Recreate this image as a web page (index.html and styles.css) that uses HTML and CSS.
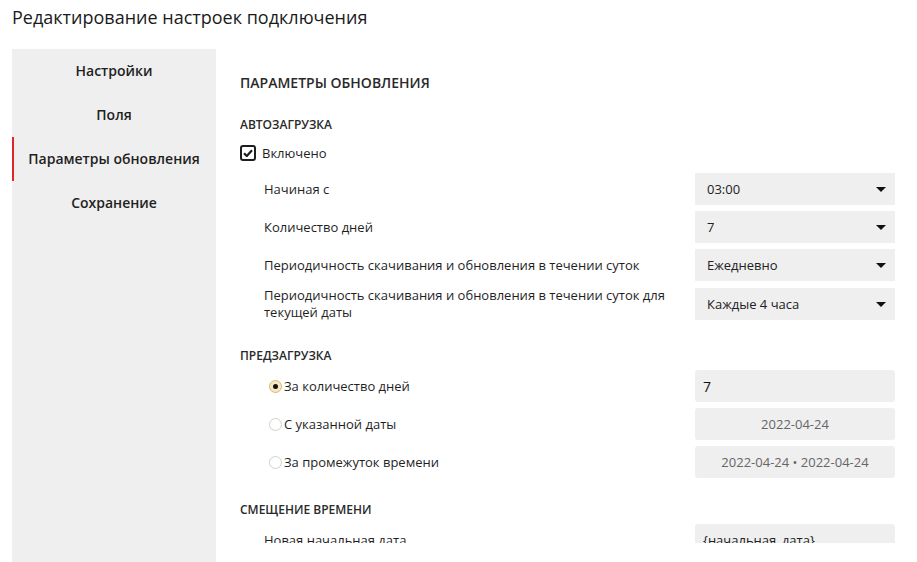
FILE: index.html
```html
<!DOCTYPE html>
<html lang="ru">
<head>
<meta charset="utf-8">
<title>Редактирование настроек подключения</title>
<link rel="stylesheet" href="styles.css">
</head>
<body>
<h1 class="page-title">Редактирование настроек подключения</h1>
<div class="layout">
  <nav class="sidebar">
    <div class="nav-item">Настройки</div>
    <div class="nav-item">Поля</div>
    <div class="nav-item active">Параметры обновления</div>
    <div class="nav-item">Сохранение</div>
  </nav>
  <main class="content">
    <h2 class="section-title">ПАРАМЕТРЫ ОБНОВЛЕНИЯ</h2>

    <h3 class="group-title">АВТОЗАГРУЗКА</h3>
    <label class="check-row">
      <span class="checkbox">
        <svg width="10" height="8" viewBox="0 0 10 8"><path d="M1 4.2 L3.8 7 L9 1.2" fill="none" stroke="#1e1e1e" stroke-width="2.2"/></svg>
      </span>
      <span>Включено</span>
    </label>

    <div class="rows">
      <div class="row">
        <div class="label">Начиная с</div>
        <div class="select"><span>03:00</span><i class="caret"></i></div>
      </div>
      <div class="row">
        <div class="label">Количество дней</div>
        <div class="select"><span>7</span><i class="caret"></i></div>
      </div>
      <div class="row">
        <div class="label">Периодичность скачивания и обновления в течении суток</div>
        <div class="select"><span>Ежедневно</span><i class="caret"></i></div>
      </div>
      <div class="row">
        <div class="label">Периодичность скачивания и обновления в течении суток для текущей даты</div>
        <div class="select"><span>Каждые 4 часа</span><i class="caret"></i></div>
      </div>
    </div>

    <h3 class="group-title group-gap">ПРЕДЗАГРУЗКА</h3>
    <div class="rows rows-tight">
      <div class="row">
        <label class="label radio-label"><span class="radio checked"></span>За количество дней</label>
        <div class="field value-strong">7</div>
      </div>
      <div class="row">
        <label class="label radio-label"><span class="radio"></span>С указанной даты</label>
        <div class="field center muted">2022-04-24</div>
      </div>
      <div class="row">
        <label class="label radio-label"><span class="radio"></span>За промежуток времени</label>
        <div class="field center muted">2022-04-24 • 2022-04-24</div>
      </div>
    </div>

    <h3 class="group-title group-gap2">СМЕЩЕНИЕ ВРЕМЕНИ</h3>
    <div class="rows rows-tight">
      <div class="row">
        <div class="label">Новая начальная дата</div>
        <div class="field">{начальная_дата}</div>
      </div>
    </div>
  </main>
</div>
</body>
</html>
```

FILE: styles.css
```css
* { box-sizing: border-box; }
html, body { margin: 0; padding: 0; background: #fff; }
body {
  font-family: "Open Sans", "Noto Sans", sans-serif;
  color: #1f1f1f;
  overflow: hidden;
  height: 562px;
}
.page-title {
  margin: 0;
  padding: 5px 12px 0;
  font-size: 18px;
  line-height: 24px;
  font-weight: 400;
  color: #1a1a1a;
}
.layout {
  display: flex;
  gap: 24px;
  padding-left: 12px;
  margin-top: 20px;
  height: 513px;
}
.sidebar {
  width: 204px;
  flex: none;
  background: #efefef;
  height: 100%;
}
.nav-item {
  height: 44px;
  display: flex;
  align-items: center;
  justify-content: center;
  font-size: 14px;
  font-weight: 600;
  color: #1f1f1f;
  border-left: 2px solid transparent;
  padding-right: 2px;
  padding-bottom: 2px;
}
.nav-item.active { border-left-color: #e0262a; }
.content {
  width: 655px;
  height: 494px;
  overflow: hidden;
  padding-top: 24px;
}
.section-title {
  margin: 0;
  font-size: 14px;
  line-height: 20px;
  font-weight: 600;
  color: #2a2a2a;
}
.group-title {
  margin: 24px 0 0;
  font-size: 12px;
  line-height: 16px;
  font-weight: 600;
  color: #2a2a2a;
}
.group-gap { margin-top: 27px; }
.group-gap2 { margin-top: 24px; }
.check-row {
  display: flex;
  align-items: center;
  gap: 6px;
  height: 20px;
  margin-top: 10px;
  font-size: 13px;
}
.checkbox {
  width: 16px;
  height: 16px;
  border: 2px solid #1e1e1e;
  border-radius: 3px;
  display: flex;
  align-items: center;
  justify-content: center;
}
.rows {
  display: flex;
  flex-direction: column;
  gap: 6px;
  margin-top: 10px;
}
.rows-tight { margin-top: 6px; }
.row {
  display: flex;
  align-items: center;
  justify-content: space-between;
  min-height: 32px;
  gap: 16px;
}
.label {
  padding-left: 24px;
  font-size: 13px;
  line-height: 17px;
  color: #1f1f1f;
  flex: 1;
}
.radio-label {
  display: flex;
  align-items: center;
}
.radio {
  width: 13px;
  height: 13px;
  border-radius: 50%;
  border: 1px solid #cfcfcf;
  background: #fff;
  margin: 0 2px 0 5px;
  flex: none;
  position: relative;
}
.radio.checked {
  background: #f7e7c6;
  border-color: #d9b873;
}
.radio.checked::after {
  content: "";
  position: absolute;
  left: 3px;
  top: 3px;
  width: 5px;
  height: 5px;
  border-radius: 50%;
  background: #111;
}
.select {
  width: 200px;
  height: 32px;
  flex: none;
  background: #efefef;
  display: flex;
  align-items: center;
  justify-content: space-between;
  padding: 0 9px 0 12px;
  font-size: 13px;
  color: #222;
}
.caret {
  width: 0;
  height: 0;
  border-left: 5px solid transparent;
  border-right: 5px solid transparent;
  border-top: 5px solid #111;
}
.field {
  width: 200px;
  height: 32px;
  flex: none;
  background: #efefef;
  border-radius: 3px;
  display: flex;
  align-items: center;
  padding: 0 8px;
  font-size: 13px;
  color: #222;
}
.field.center { justify-content: center; }
.field.muted { color: #666; }
.field.value-strong { font-size: 14px; font-weight: 400; color: #111; }
```
